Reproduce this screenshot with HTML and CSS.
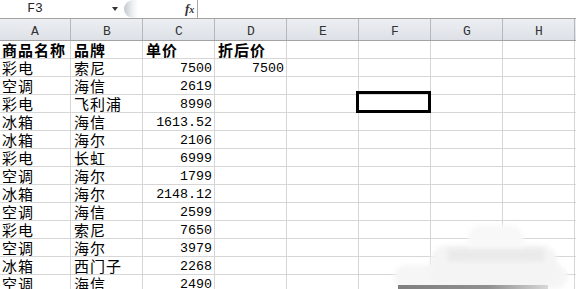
FILE: index.html
```html
<!DOCTYPE html>
<html lang="zh-CN">
<head>
  <meta charset="UTF-8">
  <meta name="viewport" content="width=device-width, initial-scale=1.0">
  <title>商品价格表</title>
  <link rel="stylesheet" href="styles.css">
</head>
<body>
<!-- Formula bar -->
<div class="formula-bar">
  <div class="name-box">F3</div>
  <span class="name-arrow"></span>
  <span class="grip"></span>
  <span class="fx">f<span class="fx-sub">x</span></span>
  <div class="formula-input"></div>
</div>

<!-- Sheet -->
<div class="sheet">
  <div class="row head">
    <div class="cell">A</div>
    <div class="cell">B</div>
    <div class="cell">C</div>
    <div class="cell">D</div>
    <div class="cell">E</div>
    <div class="cell">F</div>
    <div class="cell">G</div>
    <div class="cell">H</div>
    <div class="cell"></div>
  </div>
  <div class="row title">
    <div class="cell">商品名称</div>
    <div class="cell">品牌</div>
    <div class="cell">单价</div>
    <div class="cell">折后价</div>
    <div class="cell"></div><div class="cell"></div><div class="cell"></div><div class="cell"></div><div class="cell"></div>
  </div>
  <div id="rows"></div>

  <div class="selected"></div>
</div>

<div class="smudge">
  <span class="blob blob-a"></span>
  <span class="blob blob-b"></span>
  <span class="blob blob-c"></span>
  <span class="patch"></span>
  <span class="shade"></span>
</div>

<script>
  // Data rows: category, brand, price, discounted price
  const data = [
    ['彩电', '索尼', '7500', '7500'],
    ['空调', '海信', '2619', ''],
    ['彩电', '飞利浦', '8990', ''],
    ['冰箱', '海信', '1613.52', ''],
    ['冰箱', '海尔', '2106', ''],
    ['彩电', '长虹', '6999', ''],
    ['空调', '海尔', '1799', ''],
    ['冰箱', '海尔', '2148.12', ''],
    ['空调', '海信', '2599', ''],
    ['彩电', '索尼', '7650', ''],
    ['空调', '海尔', '3979', ''],
    ['冰箱', '西门子', '2268', ''],
    ['空调', '海信', '2490', '']
  ];

  const rows = document.getElementById('rows');
  data.forEach(item => {
    const row = document.createElement('div');
    row.className = 'row';
    row.innerHTML = `
      <div class="cell">${item[0]}</div>
      <div class="cell">${item[1]}</div>
      <div class="cell num">${item[2]}</div>
      <div class="cell num">${item[3]}</div>
      <div class="cell"></div><div class="cell"></div><div class="cell"></div><div class="cell"></div><div class="cell"></div>
    `;
    rows.appendChild(row);
  });
</script>
</body>
</html>
```

FILE: styles.css
```css
body {
  margin: 0;
  padding: 0;
  width: 576px;
  height: 289px;
  overflow: hidden;
  position: relative;
  background-color: #fff;
  font-family: "Noto Sans CJK SC", sans-serif;
  color: #000;
}

/* Formula bar */
.formula-bar {
  display: flex;
  align-items: center;
  height: 18px;
}

.name-box {
  width: 70px;
  font-family: "Liberation Mono", monospace;
  font-size: 13px;
  color: #222;
  text-align: center;
  line-height: 18px;
}

.name-arrow {
  margin-left: 42px;
  width: 0;
  height: 0;
  border-left: 3px solid transparent;
  border-right: 3px solid transparent;
  border-top: 4px solid #333;
}

.grip {
  margin-left: 6px;
  width: 14px;
  height: 18px;
  border-radius: 9px 0 0 9px;
  background: linear-gradient(90deg, #c4c8ce, #eef0f3 60%, #fff);
}

.fx {
  margin-left: 47px;
  font-family: "Liberation Serif", serif;
  font-style: italic;
  font-weight: bold;
  font-size: 13px;
  color: #333;
  line-height: 18px;
}

.fx-sub {
  font-size: 10px;
}

.formula-input {
  margin-left: 3px;
  flex: 1;
  height: 18px;
  border-left: 1px solid #a9a9a9;
}

/* Sheet grid */
.sheet {
  position: relative;
}

.row {
  display: grid;
  grid-template-columns: 71px repeat(7, 72px) 1fr;
  height: 18px;
}

.cell {
  box-sizing: border-box;
  height: 18px;
  border-right: 1px solid #d6d6d6;
  border-bottom: 1px solid #d6d6d6;
  padding: 0 2px 0 3px;
  font-size: 15px;
  letter-spacing: 1px;
  line-height: 17px;
  white-space: nowrap;
  overflow: hidden;
}

.cell:first-child {
  padding-left: 2px;
}

.num {
  font-family: "Liberation Mono", monospace;
  font-size: 13.3px;
  letter-spacing: 0;
  text-align: right;
  padding: 1px 2px 0 0;
}

.head {
  height: 23px;
  box-sizing: border-box;
  border-top: 1px solid #a3a3a3;
  border-bottom: 1px solid #a3a3a3;
  background: linear-gradient(#eceef2, #dde1e7);
}

.head .cell {
  height: 21px;
  border-bottom: none;
  border-right: 1px solid #b4b7bc;
  font-family: "Liberation Mono", monospace;
  font-size: 13px;
  letter-spacing: 0;
  color: #333;
  text-align: center;
  line-height: 26px;
}

.title .cell {
  font-weight: bold;
}

/* Active cell outline */
.selected {
  position: absolute;
  left: 356px;
  top: 73px;
  width: 69px;
  height: 16px;
  border: 3px solid #000;
}

/* Blurred watermark at the bottom right */
.smudge {
  position: absolute;
  left: 390px;
  bottom: 0;
  width: 180px;
  height: 66px;
}

.blob {
  position: absolute;
  filter: blur(2px);
}

.blob-a {
  left: 4px;
  top: 42px;
  width: 174px;
  height: 24px;
  border-radius: 12px;
  background-color: #f6f6f6;
}

.blob-b {
  left: 40px;
  top: 22px;
  width: 128px;
  height: 40px;
  border-radius: 18px;
  background-color: #f4f4f4;
}

.blob-c {
  left: 78px;
  top: 2px;
  width: 56px;
  height: 34px;
  border-radius: 14px 16px 0 0;
  background-color: #f8f8f8;
}

.patch {
  position: absolute;
  left: 58px;
  top: 26px;
  width: 96px;
  height: 12px;
  background-color: #eaeaea;
  filter: blur(2px);
}

.shade {
  position: absolute;
  left: 8px;
  bottom: 0;
  width: 150px;
  height: 4px;
  background: linear-gradient(90deg, #7f7f7f, #909090 60%, #d8d8d8);
}
```
